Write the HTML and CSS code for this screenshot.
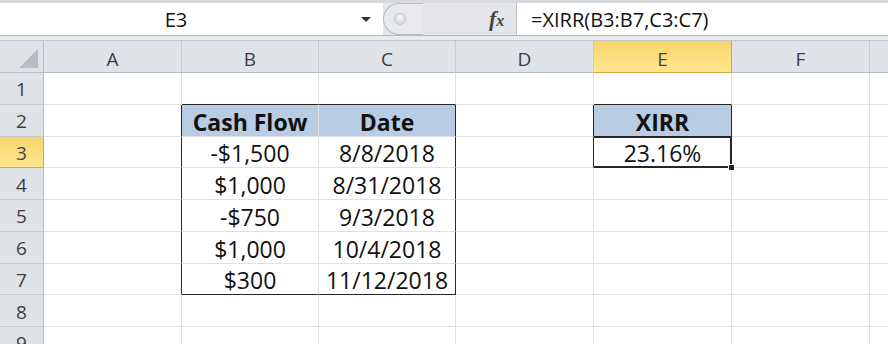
FILE: index.html
```html
<!DOCTYPE html>
<html lang="en">
<head>
    <meta charset="UTF-8">
    <title>XIRR</title>
    <link rel="stylesheet" href="styles.css">
</head>
<body>
    <div class="formula-bar">
        <div class="name-box">
            <span class="name-text">E3</span>
            <span class="drop-arrow"></span>
        </div>
        <div class="bar-mid">
            <div class="grip"><span class="grip-dot"></span></div>
            <span class="fx"><i>f</i><i class="x">x</i></span>
        </div>
        <div class="formula-input">=XIRR(B3:B7,C3:C7)</div>
    </div>
    <div class="bar-gap"></div>

    <div class="sheet">
        <!-- column headers -->
        <div class="corner"><span class="corner-tri"></span></div>
        <div class="colhead">A</div>
        <div class="colhead">B</div>
        <div class="colhead">C</div>
        <div class="colhead">D</div>
        <div class="colhead active">E</div>
        <div class="colhead">F</div>
        <div class="colhead"></div>

        <!-- row 1 -->
        <div class="rowhead">1</div>
        <div class="cell"></div>
        <div class="cell edge-b"></div>
        <div class="cell edge-b"></div>
        <div class="cell"></div>
        <div class="cell edge-b"></div>
        <div class="cell"></div>
        <div class="cell"></div>

        <!-- row 2 -->
        <div class="rowhead">2</div>
        <div class="cell edge-r"></div>
        <div class="cell head-fill bold">Cash Flow</div>
        <div class="cell head-fill bold edge-r">Date</div>
        <div class="cell edge-r"></div>
        <div class="cell head-fill bold edge-r edge-b">XIRR</div>
        <div class="cell"></div>
        <div class="cell"></div>

        <!-- row 3 -->
        <div class="rowhead active">3</div>
        <div class="cell edge-r"></div>
        <div class="cell">-$1,500</div>
        <div class="cell edge-r">8/8/2018</div>
        <div class="cell edge-r"></div>
        <div class="cell selected edge-r edge-b">23.16%<span class="fill-handle"></span></div>
        <div class="cell"></div>
        <div class="cell"></div>

        <!-- row 4 -->
        <div class="rowhead">4</div>
        <div class="cell edge-r"></div>
        <div class="cell">$1,000</div>
        <div class="cell edge-r">8/31/2018</div>
        <div class="cell"></div>
        <div class="cell"></div>
        <div class="cell"></div>
        <div class="cell"></div>

        <!-- row 5 -->
        <div class="rowhead">5</div>
        <div class="cell edge-r"></div>
        <div class="cell">-$750</div>
        <div class="cell edge-r">9/3/2018</div>
        <div class="cell"></div>
        <div class="cell"></div>
        <div class="cell"></div>
        <div class="cell"></div>

        <!-- row 6 -->
        <div class="rowhead">6</div>
        <div class="cell edge-r"></div>
        <div class="cell">$1,000</div>
        <div class="cell edge-r">10/4/2018</div>
        <div class="cell"></div>
        <div class="cell"></div>
        <div class="cell"></div>
        <div class="cell"></div>

        <!-- row 7 -->
        <div class="rowhead">7</div>
        <div class="cell edge-r"></div>
        <div class="cell edge-b">$300</div>
        <div class="cell edge-r edge-b">11/12/2018</div>
        <div class="cell"></div>
        <div class="cell"></div>
        <div class="cell"></div>
        <div class="cell"></div>

        <!-- row 8 -->
        <div class="rowhead">8</div>
        <div class="cell"></div>
        <div class="cell"></div>
        <div class="cell"></div>
        <div class="cell"></div>
        <div class="cell"></div>
        <div class="cell"></div>
        <div class="cell"></div>

        <!-- row 9 -->
        <div class="rowhead">9</div>
        <div class="cell"></div>
        <div class="cell"></div>
        <div class="cell"></div>
        <div class="cell"></div>
        <div class="cell"></div>
        <div class="cell"></div>
        <div class="cell"></div>
    </div>
</body>
</html>
```

FILE: styles.css
```css
body {
    margin: 0;
    width: 888px;
    height: 344px;
    overflow: hidden;
    background-color: #fff;
    font-family: "Open Sans", "Noto Sans", sans-serif;
}

/* formula bar */
.formula-bar {
    display: flex;
    height: 32px;
    border-top: 3px solid #d7d9dc;
    border-bottom: 1px solid #b4b7bc;
}

.name-box {
    width: 383px;
    display: flex;
    align-items: center;
    background-color: #fff;
}

.name-text {
    width: 352px;
    text-align: center;
    font-size: 20px;
    color: #111;
}

.drop-arrow {
    width: 0;
    height: 0;
    margin-left: 9px;
    border-left: 5px solid transparent;
    border-right: 5px solid transparent;
    border-top: 5px solid #333;
}

.bar-mid {
    width: 133px;
    display: flex;
    align-items: center;
    background-color: #e3e5e8;
    border-right: 1px solid #b9bcc0;
}

.grip {
    width: 40px;
    height: 32px;
    box-sizing: border-box;
    border: 1px solid #b8bbc0;
    border-right: none;
    border-radius: 16px 0 0 16px;
    background-color: #e7e9ec;
    display: flex;
    align-items: center;
    padding-left: 10px;
}

.grip-dot {
    width: 10px;
    height: 10px;
    border-radius: 50%;
    background: radial-gradient(circle at 50% 35%, #fafafa, #c9ccd0);
    border: 1px solid #c3c6ca;
}

.fx {
    margin-left: 66px;
    font-family: "Liberation Serif", serif;
    font-size: 22px;
    font-weight: bold;
    color: #444;
}

.fx .x {
    font-size: 16px;
}

.formula-input {
    flex: 1;
    padding-left: 14px;
    display: flex;
    align-items: center;
    font-size: 20px;
    color: #111;
    background-color: #fff;
}

.bar-gap {
    height: 4px;
    background-color: #eaebec;
    border-bottom: 1px solid #c6c9ce;
}

/* grid */
.sheet {
    display: grid;
    grid-template-columns: 44px 138px 137px 137px 138px 138px 138px 138px;
    grid-template-rows: 32px repeat(9, 31.75px);
}

.corner {
    background-color: #dfe3e8;
    border-right: 1px solid #b8bcc2;
    border-bottom: 1px solid #b8bcc2;
    display: flex;
    align-items: flex-end;
    justify-content: flex-end;
    padding: 0 5px 4px 0;
}

.corner-tri {
    width: 19px;
    height: 19px;
    background-color: #b9bdc3;
    clip-path: polygon(100% 0, 100% 100%, 0 100%);
}

.colhead {
    background-color: #dfe3e8;
    border-right: 1px solid #c8ccd2;
    border-bottom: 1px solid #b8bcc2;
    display: flex;
    align-items: center;
    justify-content: center;
    padding-top: 4px;
    font-size: 19px;
    color: #3d3d3d;
}

.rowhead {
    background-color: #dfe3e8;
    border-right: 1px solid #b8bcc2;
    border-bottom: 1px solid #c8ccd2;
    display: flex;
    align-items: center;
    justify-content: center;
    padding-top: 2px;
    font-size: 19px;
    color: #3d3d3d;
}

.colhead.active,
.rowhead.active {
    background: linear-gradient(#f9d56d, #ffe58c);
    border-color: #e1a540;
    color: #444;
}

.cell {
    position: relative;
    border-right: 1px solid #e0e0e0;
    border-bottom: 1px solid #e0e0e0;
    display: flex;
    align-items: flex-end;
    justify-content: center;
    font-size: 23px;
    line-height: 28px;
    color: #111;
    white-space: nowrap;
}

.bold {
    font-weight: bold;
}

.head-fill {
    background-color: #b8cce4;
}

.edge-r {
    border-right-color: #262626;
}

.edge-b {
    border-bottom-color: #262626;
}

.selected {
    box-shadow: inset 0 1px 0 #262626, inset -1px -1px 0 #262626;
}

.fill-handle {
    position: absolute;
    right: -4px;
    bottom: -4px;
    width: 5px;
    height: 5px;
    background-color: #222;
    border: 1px solid #fff;
    z-index: 2;
}
```
